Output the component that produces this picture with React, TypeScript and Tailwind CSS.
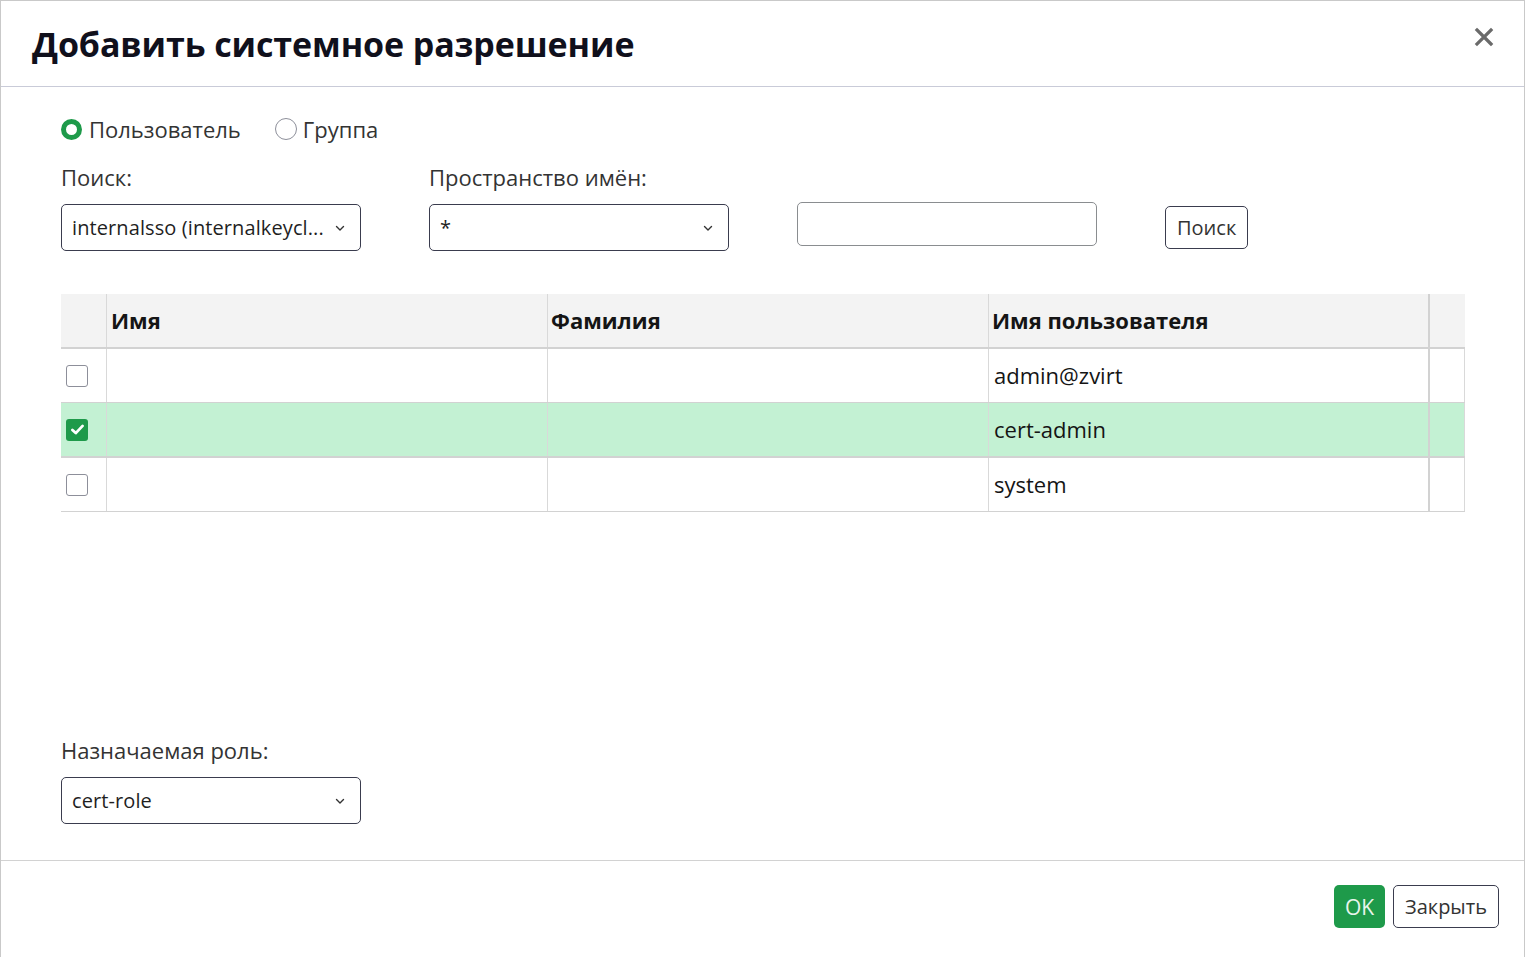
import React from "react";

const Chevron = () => (
  <svg width="12" height="12" viewBox="0 0 12 12" className="shrink-0">
    <path d="M2.5 4.5 L6 8 L9.5 4.5" fill="none" stroke="#333" strokeWidth="1.4" strokeLinecap="round" strokeLinejoin="round" />
  </svg>
);

const Select = ({ value, w = "w-[300px]" }: { value: string; w?: string }) => (
  <div className={`${w} h-[47px] border border-[#3a3c4e] rounded-[5px] flex items-center justify-between pl-[10px] pr-[14px] text-[20px] tracking-[0.1px] text-[#1f1f1f] bg-white`}>
    <span className="truncate">{value}</span>
    <Chevron />
  </div>
);

const Checkbox = ({ checked }: { checked?: boolean }) =>
  checked ? (
    <div className="w-[22px] h-[22px] rounded-[3px] bg-[#1e9a4a] flex items-center justify-center">
      <svg width="17" height="17" viewBox="0 0 16 16">
        <path d="M3.2 8.4 L6.4 11.4 L12.8 4.6" fill="none" stroke="white" strokeWidth="2.6" strokeLinecap="round" strokeLinejoin="round" />
      </svg>
    </div>
  ) : (
    <div className="w-[22px] h-[22px] rounded-[3px] border border-[#8d8f9a] bg-white" />
  );

const rows = [
  { u: "admin@zvirt", sel: false },
  { u: "cert-admin", sel: true },
  { u: "system", sel: false },
];

export default function App() {
  return (
    <div className="w-[1526px] h-[957px] bg-white overflow-hidden" style={{ fontFamily: '"Open Sans", "Noto Sans", sans-serif' }}>
      <div className="w-[1525px] border border-[#c9c9c9] flex flex-col">
        {/* header */}
        <div className="h-[86px] border-b border-[#c9cbd8] flex items-center justify-between pl-[31px] pr-[30px] shrink-0">
          <h1 className="text-[34px] leading-[46px] font-bold text-[#10101c] tracking-[-0.1px] pt-[1px]">Добавить системное разрешение</h1>
          <svg width="20" height="20" viewBox="0 0 20 20" className="mb-[14px]">
            <path d="M3 3 L17 17 M17 3 L3 17" stroke="#6a6a6a" strokeWidth="3.2" strokeLinecap="square" />
          </svg>
        </div>

        {/* body */}
        <div className="h-[773px] px-[60px] pt-[27px] flex flex-col shrink-0">
          <div className="flex items-center gap-[34px] text-[22px] leading-[30px] text-[#333]">
            <label className="flex items-center gap-[7px]">
              <span className="w-[21px] h-[21px] rounded-full border-[5px] border-[#1e9a4a] bg-white" />
              Пользователь
            </label>
            <label className="flex items-center gap-[6px]">
              <span className="w-[22px] h-[22px] rounded-full border border-[#8d8f9a] bg-white" />
              Группа
            </label>
          </div>

          <div className="flex items-end mt-[18px]">
            <div className="flex flex-col gap-[12px] w-[368px]">
              <span className="text-[22px] text-[#333] leading-[30px]">Поиск:</span>
              <Select value="internalsso (internalkeycl..." />
            </div>
            <div className="flex flex-col gap-[12px] w-[368px]">
              <span className="text-[22px] text-[#333] leading-[30px]">Пространство имён:</span>
              <Select value="*" />
            </div>
            <div className="w-[368px] flex items-end pb-[5px]">
              <div className="w-[300px] h-[44px] border border-[#8a8d90] rounded-[5px] bg-white" />
            </div>
            <div className="pb-[2px]">
              <button className="h-[43px] px-[11px] border border-[#3a3c4e] rounded-[5px] text-[20px] leading-[28px] text-[#333] bg-white">Поиск</button>
            </div>
          </div>

          {/* table */}
          <div className="mt-[43px] w-[1404px]">
            <div className="flex h-[55px] bg-[#f3f3f3] border-b-2 border-[#d2d2d2]">
              <div className="w-[46px] border-r border-[#d9d9d9]" />
              <div className="w-[441px] border-r border-[#d9d9d9] flex items-center pl-[4px] text-[22px] font-bold text-[#151515]">Имя</div>
              <div className="w-[441px] border-r border-[#d9d9d9] flex items-center pl-[3px] text-[22px] font-bold text-[#151515]">Фамилия</div>
              <div className="w-[441px] border-r-2 border-[#d2d2d2] flex items-center pl-[3px] text-[22px] font-bold text-[#151515]">Имя пользователя</div>
              <div className="flex-1" />
            </div>
            {rows.map((r, i) => (
              <div key={i} className={`flex h-[54px] border-b border-[#d2d2d2] ${r.sel ? "bg-[#c3f1d3] border-b-2 h-[55px]" : "bg-white"}`}>
                <div className="w-[46px] border-r border-[#d9d9d9] flex items-center pl-[5px]">
                  <Checkbox checked={r.sel} />
                </div>
                <div className="w-[441px] border-r border-[#d9d9d9]" />
                <div className="w-[441px] border-r border-[#d9d9d9]" />
                <div className="w-[441px] border-r-2 border-[#d2d2d2] flex items-center pl-[5px] text-[22px] text-[#151515]">{r.u}</div>
                <div className="flex-1 border-r border-[#d9d9d9]" />
              </div>
            ))}
          </div>

          <div className="mt-auto mb-[36px] flex flex-col gap-[12px]">
            <span className="text-[22px] text-[#333] leading-[30px]">Назначаемая роль:</span>
            <Select value="cert-role" />
          </div>
        </div>

        {/* footer */}
        <div className="h-[120px] border-t border-[#d2d2d2] flex justify-end items-start gap-[8px] pt-[24px] pr-[25px] shrink-0">
          <button className="h-[43px] w-[51px] rounded-[5px] bg-[#1e9a4a] text-[21px] leading-[28px] text-[#e8f5ec]">OK</button>
          <button className="h-[43px] w-[106px] rounded-[5px] border border-[#3a3c4e] text-[20px] leading-[28px] text-[#333] bg-white">Закрыть</button>
        </div>
      </div>
    </div>
  );
}
